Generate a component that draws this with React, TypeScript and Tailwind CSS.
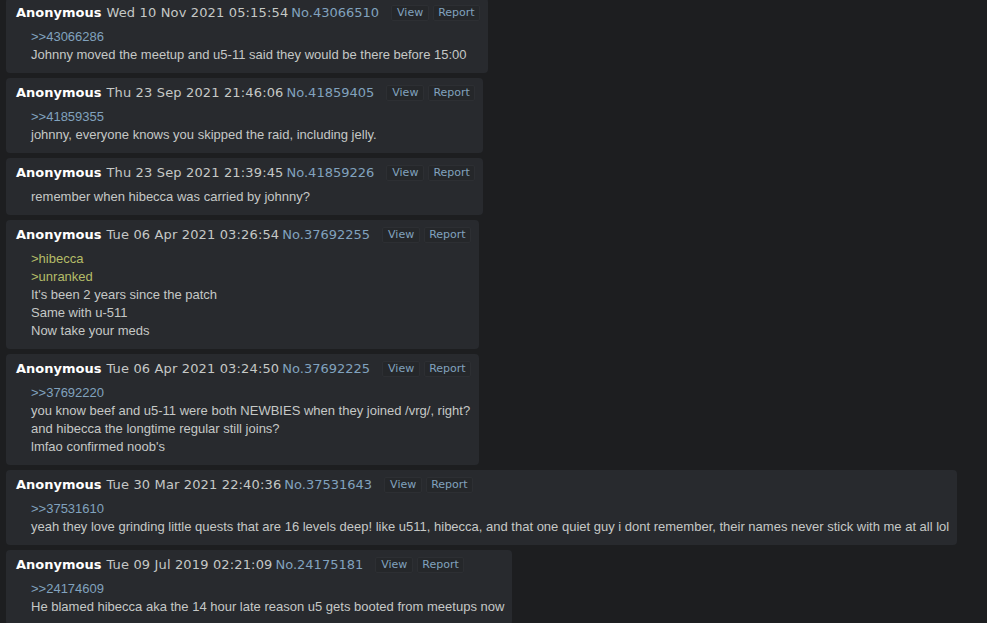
type Line = { kind: "quote" | "green" | "text"; text: string };

interface Post {
    date: string;
    no: string;
    lines: Line[];
}

const posts: Post[] = [
    {
        date: "Wed 10 Nov 2021 05:15:54",
        no: "43066510",
        lines: [
            { kind: "quote", text: ">>43066286" },
            { kind: "text", text: "Johnny moved the meetup and u5-11 said they would be there before 15:00" },
        ],
    },
    {
        date: "Thu 23 Sep 2021 21:46:06",
        no: "41859405",
        lines: [
            { kind: "quote", text: ">>41859355" },
            { kind: "text", text: "johnny, everyone knows you skipped the raid, including jelly." },
        ],
    },
    {
        date: "Thu 23 Sep 2021 21:39:45",
        no: "41859226",
        lines: [{ kind: "text", text: "remember when hibecca was carried by johnny?" }],
    },
    {
        date: "Tue 06 Apr 2021 03:26:54",
        no: "37692255",
        lines: [
            { kind: "green", text: ">hibecca" },
            { kind: "green", text: ">unranked" },
            { kind: "text", text: "It's been 2 years since the patch" },
            { kind: "text", text: "Same with u-511" },
            { kind: "text", text: "Now take your meds" },
        ],
    },
    {
        date: "Tue 06 Apr 2021 03:24:50",
        no: "37692225",
        lines: [
            { kind: "quote", text: ">>37692220" },
            { kind: "text", text: "you know beef and u5-11 were both NEWBIES when they joined /vrg/, right?" },
            { kind: "text", text: "and hibecca the longtime regular still joins?" },
            { kind: "text", text: "lmfao confirmed noob's" },
        ],
    },
    {
        date: "Tue 30 Mar 2021 22:40:36",
        no: "37531643",
        lines: [
            { kind: "quote", text: ">>37531610" },
            {
                kind: "text",
                text: "yeah they love grinding little quests that are 16 levels deep! like u511, hibecca, and that one quiet guy i dont remember, their names never stick with me at all lol",
            },
        ],
    },
    {
        date: "Tue 09 Jul 2019 02:21:09",
        no: "24175181",
        lines: [
            { kind: "quote", text: ">>24174609" },
            { kind: "text", text: "He blamed hibecca aka the 14 hour late reason u5 gets booted from meetups now" },
        ],
    },
];

function PostBox({ post }: { post: Post }) {
    return (
        <div className="bg-[#282a2e] rounded-[4px] pl-[10px] pr-[8px] pt-[5px] pb-[9px]">
            <div className="flex items-center h-[20px] whitespace-nowrap font-['DejaVu_Sans',sans-serif] text-[13px]">
                <span className="font-bold text-white">Anonymous</span>
                <span className="ml-[5px] tracking-[0.15px] text-[#c5c8c6]">{post.date}</span>
                <span className="ml-[3px] text-[#81a2be]">No.{post.no}</span>
                <div className="ml-[12px] flex gap-[4px] text-[11px] text-[#81a2be]">
                    <span className="h-[16px] px-[5px] flex items-center bg-[#25272a] border border-[#2d2f33] rounded-[2px]">
                        View
                    </span>
                    <span className="h-[16px] px-[4px] flex items-center bg-[#25272a] border border-[#2d2f33] rounded-[2px]">
                        Report
                    </span>
                </div>
            </div>
            <div className="mt-[5px] ml-[15px] font-['Liberation_Sans',Arial,sans-serif] text-[13px] leading-[18px] whitespace-nowrap">
                {post.lines.map((line, i) => (
                    <div
                        key={i}
                        className={
                            line.kind === "quote"
                                ? "text-[#81a2be]"
                                : line.kind === "green"
                                ? "text-[#b5bd68]"
                                : "text-[#c5c8c6]"
                        }
                    >
                        {line.text}
                    </div>
                ))}
            </div>
        </div>
    );
}

export default function App() {
    return (
        <div className="w-[987px] h-[623px] overflow-hidden bg-[#1d1e20]">
            <div className="pl-[6px] -mt-[2px] flex flex-col items-start gap-[5px]">
                {posts.map(post => (
                    <PostBox key={post.no} post={post} />
                ))}
            </div>
        </div>
    );
}
